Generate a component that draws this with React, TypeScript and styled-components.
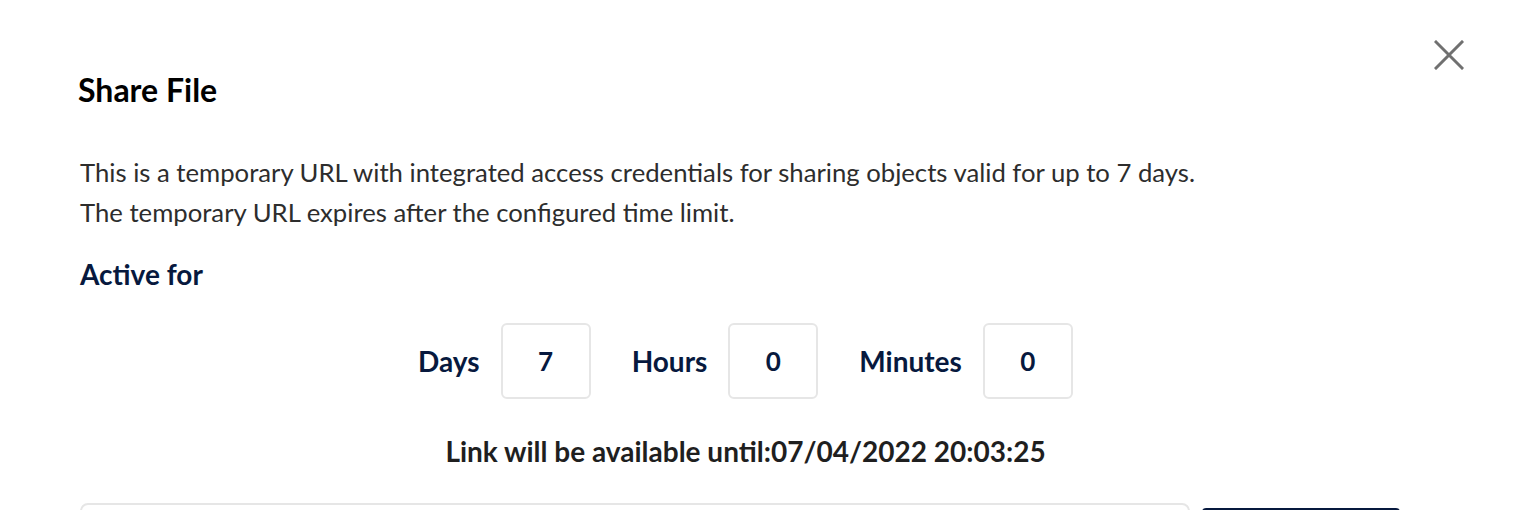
import React from 'react';
import styled, { createGlobalStyle } from 'styled-components';

const GlobalStyle = createGlobalStyle`
  html, body {
    margin: 0;
    padding: 0;
    background: #ffffff;
    font-family: Lato, "Noto Sans", sans-serif;
  }
`;

const Modal = styled.div`
  position: relative;
  box-sizing: border-box;
  width: 1522px;
  height: 510px;
  padding: 70px 109px 0 78px;
  overflow: hidden;
  background: #ffffff;
`;

const CloseButton = styled.button`
  position: absolute;
  top: 37px;
  right: 55px;
  width: 36px;
  height: 36px;
  padding: 0;
  border: none;
  background: none;
  cursor: pointer;
  display: flex;
  align-items: center;
  justify-content: center;
`;

const Title = styled.h2`
  margin: 0;
  font-size: 32px;
  font-weight: 700;
  color: #000000;
  line-height: 40px;
`;

const Description = styled.p`
  margin: 42px 0 0 2px;
  font-size: 25.7px;
  line-height: 40px;
  color: #2d2d2d;
`;

const SectionLabel = styled.h3`
  margin: 26px 0 0 2px;
  font-size: 28px;
  font-weight: 700;
  color: #07193e;
  line-height: 32px;
`;

const DurationRow = styled.div`
  margin-top: 33px;
  display: flex;
  justify-content: center;
  align-items: center;
  gap: 20px;
`;

const Field = styled.label`
  display: flex;
  align-items: center;
  gap: 21px;
  margin-right: 21px;

  &:last-child {
    margin-right: 0;
  }
`;

const FieldName = styled.span`
  font-size: 28px;
  font-weight: 700;
  color: #07193e;
`;

const NumberBox = styled.input`
  box-sizing: border-box;
  width: 90px;
  height: 76px;
  border: 2px solid #e6e6e6;
  border-radius: 6px;
  text-align: center;
  font-family: inherit;
  font-size: 26px;
  font-weight: 700;
  color: #07193e;
  outline: none;
`;

const ExpiryText = styled.div`
  margin-top: 36px;
  text-align: center;
  font-size: 28px;
  line-height: 32px;
  font-weight: 700;
  color: #1f1f1f;
`;

const LinkRow = styled.div`
  margin-top: 36px;
  display: flex;
  align-items: flex-start;
  gap: 12px;
  margin-left: 2px;
`;

const LinkBox = styled.div`
  box-sizing: border-box;
  width: 1110px;
  height: 60px;
  border: 2px solid #e6e6e6;
  border-radius: 8px;
`;

const CopyButton = styled.button`
  margin-top: 5px;
  width: 198px;
  height: 60px;
  border: none;
  border-radius: 4px;
  background: #07193e;
`;

export default function App() {
  return (
    <>
      <GlobalStyle />
      <Modal>
        <CloseButton aria-label="Close">
          <svg width="30" height="30" viewBox="0 0 30 30">
            <path d="M2 2 L28 28 M28 2 L2 28" stroke="#707070" strokeWidth="3" strokeLinecap="square" />
          </svg>
        </CloseButton>
        <Title>Share File</Title>
        <Description>
          This is a temporary URL with integrated access credentials for sharing objects valid for up to 7 days.
          <br />
          The temporary URL expires after the configured time limit.
        </Description>
        <SectionLabel>Active for</SectionLabel>
        <DurationRow>
          <Field>
            <FieldName>Days</FieldName>
            <NumberBox defaultValue="7" />
          </Field>
          <Field>
            <FieldName>Hours</FieldName>
            <NumberBox defaultValue="0" />
          </Field>
          <Field>
            <FieldName>Minutes</FieldName>
            <NumberBox defaultValue="0" />
          </Field>
        </DurationRow>
        <ExpiryText>Link will be available until:07/04/2022 20:03:25</ExpiryText>
        <LinkRow>
          <LinkBox />
          <CopyButton />
        </LinkRow>
      </Modal>
    </>
  );
}
